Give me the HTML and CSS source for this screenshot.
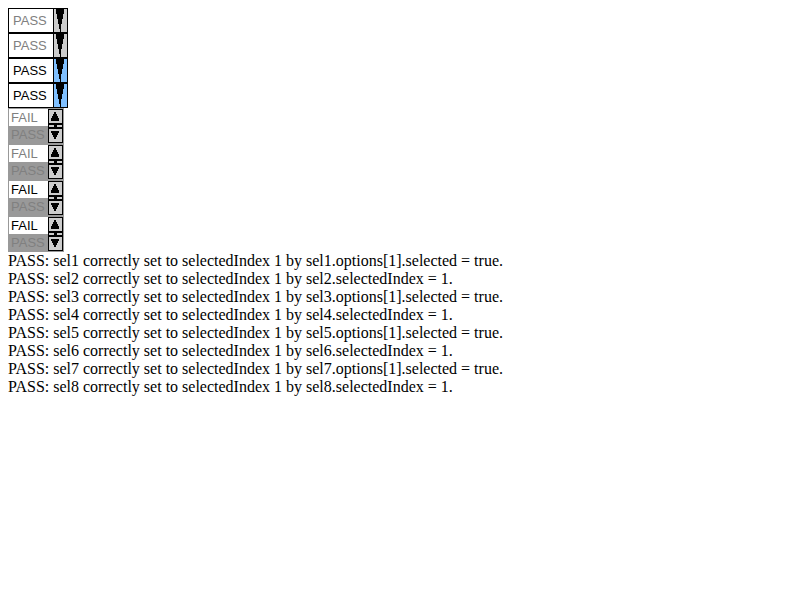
FILE: index.html
```
<!DOCTYPE html>
<html lang="en">
<head>
<meta charset="utf-8">
<title>Select index test</title>
<link rel="stylesheet" href="styles.css">
</head>
<body>
<svg class="defs" aria-hidden="true">
  <symbol id="drop" viewBox="0 0 15 25">
    <path fill="#000" d="M0 0h15v25H0z"/>
    <path fill="currentColor" d="M1 1h2v5h1v5h1v5h1v5h1v3H1zM14 1h-3v5h-1v5H9v5H8v8h6z"/>
  </symbol>
  <symbol id="scroll" viewBox="0 0 15 34">
    <path fill="#000" d="M0 0h15v34H0z"/>
    <path fill="#ccc" d="M1 1h13v13H1zM1 20h13v13H1zM1 16h5v2H1zM9 16h5v2H9z"/>
    <path fill="#000" d="M6 3h2v2h1v2h1v2h1v3H3V9h1V7h1V5h1zM3 22h8v2h-1v2H9v2H8v2H6v-2H5v-2H4v-2H3z"/>
  </symbol>
</svg>
<form class="controls">
  <div class="combo off"><select aria-label="sel1" disabled><option>FAIL</option><option selected>PASS</option></select><svg class="drop" aria-hidden="true"><use href="#drop"/></svg></div>
  <div class="combo off"><select aria-label="sel2" disabled><option>FAIL</option><option selected>PASS</option></select><svg class="drop" aria-hidden="true"><use href="#drop"/></svg></div>
  <div class="combo"><select aria-label="sel3"><option>FAIL</option><option selected>PASS</option></select><svg class="drop" aria-hidden="true"><use href="#drop"/></svg></div>
  <div class="combo"><select aria-label="sel4"><option>FAIL</option><option selected>PASS</option></select><svg class="drop" aria-hidden="true"><use href="#drop"/></svg></div>
  <div class="list"><select aria-label="sel5" size="2" disabled><option>FAIL</option><option selected>PASS</option></select><svg class="scroll" aria-hidden="true"><use href="#scroll"/></svg></div>
  <div class="list"><select aria-label="sel6" size="2" disabled><option>FAIL</option><option selected>PASS</option></select><svg class="scroll" aria-hidden="true"><use href="#scroll"/></svg></div>
  <div class="list"><select aria-label="sel7" size="2"><option>FAIL</option><option selected>PASS</option></select><svg class="scroll" aria-hidden="true"><use href="#scroll"/></svg></div>
  <div class="list"><select aria-label="sel8" size="2"><option>FAIL</option><option selected>PASS</option></select><svg class="scroll" aria-hidden="true"><use href="#scroll"/></svg></div>
</form>
<div class="results">
  <div>PASS: sel1 correctly set to selectedIndex 1 by sel1.options[1].selected = true.</div>
  <div>PASS: sel2 correctly set to selectedIndex 1 by sel2.selectedIndex = 1.</div>
  <div>PASS: sel3 correctly set to selectedIndex 1 by sel3.options[1].selected = true.</div>
  <div>PASS: sel4 correctly set to selectedIndex 1 by sel4.selectedIndex = 1.</div>
  <div>PASS: sel5 correctly set to selectedIndex 1 by sel5.options[1].selected = true.</div>
  <div>PASS: sel6 correctly set to selectedIndex 1 by sel6.selectedIndex = 1.</div>
  <div>PASS: sel7 correctly set to selectedIndex 1 by sel7.options[1].selected = true.</div>
  <div>PASS: sel8 correctly set to selectedIndex 1 by sel8.selectedIndex = 1.</div>
</div>
</body>
</html>
```
FILE: styles.css
```
body {
  margin: 8px;
  background: #fff;
  color: #000;
  font: 16px/18px "Liberation Serif", serif;
}
.defs {
  position: absolute;
  width: 0;
  height: 0;
}
.controls {
  display: flex;
  flex-direction: column;
  align-items: flex-start;
}
.combo,
.list {
  display: flex;
}
select {
  appearance: none;
  box-sizing: border-box;
  margin: 0;
  border: 0;
  border-radius: 0;
  background: #fff;
  color: #000;
  font: 13px/16px "Liberation Sans", Arial, sans-serif;
  opacity: 1;
  outline: 0;
}
select:disabled,
select:disabled option {
  color: #808080;
  opacity: 1;
}
.combo {
  color: #80c0ff;
}
.combo.off {
  color: #ccc;
}
.combo select {
  width: 45px;
  height: 25px;
  padding: 1px 0 0 4px;
  border: 1px solid #000;
  border-right: 0;
}
.drop {
  display: block;
  width: 15px;
  height: 25px;
}
.list {
  border: 1px solid #999;
}
.list select {
  width: 39px;
  height: 34px;
  padding: 0;
  overflow: hidden;
}
.list option {
  min-height: 0;
  height: 17px;
  padding: 1px 2px 0;
  box-sizing: border-box;
  line-height: 16px;
}
.list option:checked {
  background: #999 linear-gradient(#999, #999);
  color: #808080;
  -webkit-text-fill-color: #808080;
}
.scroll {
  display: block;
  width: 15px;
  height: 34px;
}
```
